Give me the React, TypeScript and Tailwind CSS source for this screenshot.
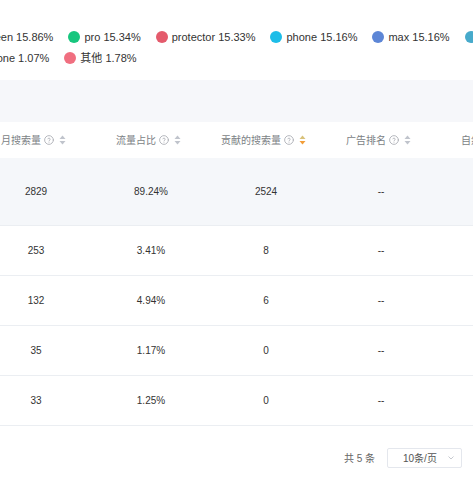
const legendTop = [
  { label: "screen", value: "15.86%", color: "bg-[#4f7fd6]" },
  { label: "pro", value: "15.34%", color: "bg-[#17c67e]" },
  { label: "protector", value: "15.33%", color: "bg-[#e45b6c]" },
  { label: "phone", value: "15.16%", color: "bg-[#1dbde8]" },
  { label: "max", value: "15.16%", color: "bg-[#5d86d6]" },
  { label: "case", value: "15.02%", color: "bg-[#47aacb]" },
];

const legendBottom = [
  { label: "iphone", value: "1.07%", color: "bg-[#8a6fd8]" },
  { label: "其他", value: "1.78%", color: "bg-[#f06f80]" },
];

const columns = [
  { title: "月搜索量", active: false },
  { title: "流量占比", active: false },
  { title: "贡献的搜索量", active: true },
  { title: "广告排名", active: false },
  { title: "自然排名", active: false },
];

const rows = [
  ["2829", "89.24%", "2524", "--", "--"],
  ["253", "3.41%", "8", "--", "--"],
  ["132", "4.94%", "6", "--", "--"],
  ["35", "1.17%", "0", "--", "--"],
  ["33", "1.25%", "0", "--", "--"],
];

function HelpIcon() {
  return (
    <svg width="10" height="10" viewBox="0 0 24 24" fill="none" stroke="#a8abb2" strokeWidth="2" strokeLinecap="round" strokeLinejoin="round">
      <circle cx="12" cy="12" r="10.5" />
      <path d="M9.3 9.2a2.8 2.8 0 0 1 5.4 1c0 1.9-2.7 2.5-2.7 3.8" />
      <path d="M12 17.5h.01" />
    </svg>
  );
}

function SortIcon({ active }: { active: boolean }) {
  return (
    <svg width="7" height="10" viewBox="0 0 7 10">
      <path d="M3.5 0.5 L6.5 4 L0.5 4 Z" fill={active ? "#d9c27a" : "#c0c4cc"} />
      <path d="M0.5 6 L6.5 6 L3.5 9.5 Z" fill={active ? "#f29d38" : "#c0c4cc"} />
    </svg>
  );
}

function LegendRow({ items, offset }: { items: typeof legendTop; offset: string }) {
  return (
    <div className={`flex h-[16px] items-center gap-[15px] whitespace-nowrap ${offset}`}>
      {items.map((item) => (
        <div key={item.label} className="flex items-center gap-[4px]">
          <span className={`block h-[12px] w-[12px] shrink-0 rounded-full ${item.color}`} />
          <span className="text-[11px] leading-[16px] text-[#333]">
            {item.label} {item.value}
          </span>
        </div>
      ))}
    </div>
  );
}

export default function App() {
  return (
    <div
      className="h-[477px] w-[473px] overflow-hidden bg-white"
      style={{ fontFamily: '"Liberation Sans", "Noto Sans CJK SC", sans-serif' }}
    >
      <div className="flex flex-col gap-[5px] pt-[29px]">
        <LegendRow items={legendTop} offset="-ml-[36px]" />
        <LegendRow items={legendBottom} offset="-ml-[34px]" />
      </div>

      <div className="mt-[14px] h-[42px] bg-[#f6f7fa]" />

      <div className="-ml-[24px] w-[600px]">
        <div className="flex h-[36px] items-center bg-white">
          {columns.map((col) => (
            <div key={col.title} className="flex w-[115px] shrink-0 items-center justify-center">
              <span className="text-[10px] text-[#7c7f85]">{col.title}</span>
              <span className="ml-[3px] flex">
                <HelpIcon />
              </span>
              <span className="ml-[5px] flex">
                <SortIcon active={col.active} />
              </span>
            </div>
          ))}
        </div>

        {rows.map((row, i) => (
          <div
            key={i}
            className={`flex items-center border-b border-[#ebeef2] ${i === 0 ? "h-[68px] bg-[#f5f7fa]" : "h-[50px] bg-white"}`}
          >
            {row.map((cell, j) => (
              <div key={j} className="w-[115px] shrink-0 pl-[5px] text-center text-[10px] text-[#333]">
                {cell}
              </div>
            ))}
          </div>
        ))}
      </div>

      <div className="flex items-center justify-end gap-[12px] pr-[11px] pt-[22px]">
        <span className="text-[10px] text-[#666]">共 5 条</span>
        <div className="flex h-[20px] w-[75px] items-center justify-between rounded-[2px] border border-[#e4e7ed] pl-[15px] pr-[7px]">
          <span className="text-[10px] text-[#555]">10条/页</span>
          <svg width="6" height="4" viewBox="0 0 6 4" fill="none" stroke="#c6c9cf" strokeWidth="1">
            <path d="M0.5 0.5 L3 3 L5.5 0.5" />
          </svg>
        </div>
      </div>
    </div>
  );
}
